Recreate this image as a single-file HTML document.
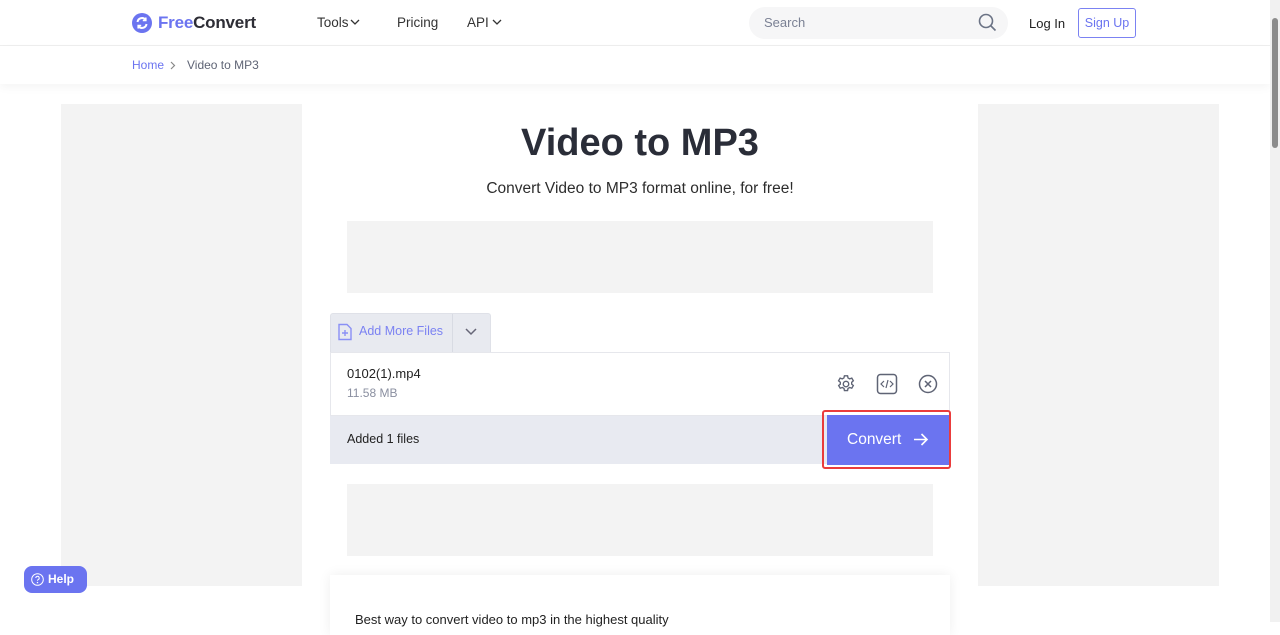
<!DOCTYPE html>
<html><head><meta charset="utf-8"><style>
*{box-sizing:border-box;margin:0;padding:0}
body{width:1280px;height:622px;overflow:hidden;background:#fff;font-family:"Liberation Sans",sans-serif;color:#2d2d2d;position:relative}
.hdr{position:absolute;left:0;top:0;width:1270px;height:46px;border-bottom:1px solid #eee;background:#fff}
.bc{position:absolute;left:0;top:46px;width:1270px;height:38px;background:#fff;box-shadow:0 4px 8px rgba(0,0,0,.04);font-size:12px}
.abs{position:absolute}
.ad{position:absolute;background:#f3f3f3}
.sb{position:absolute;right:0;top:0;width:10px;height:622px;background:#f1f1f1}
</style></head><body>
<div class="hdr">
 <svg class="abs" style="left:132px;top:13px" width="20" height="20" viewBox="0 0 20 20"><circle cx="10" cy="10" r="10" fill="#6b74f0"/><path d="M5.5 9a4.5 4.5 0 0 1 8-2.2M14.5 11a4.5 4.5 0 0 1-8 2.2" stroke="#fff" stroke-width="2" fill="none"/><path d="M13.8 4.5v3h-3M6.2 15.5v-3h3" stroke="#fff" stroke-width="1.6" fill="none"/></svg>
 <div class="abs" style="left:158px;top:13px;font-size:17px;font-weight:bold;letter-spacing:-.2px"><span style="color:#6b74f0">Free</span><span style="color:#2d2d35">Convert</span></div>
 <div class="abs" style="left:317px;top:15px;font-size:13.5px;color:#333">Tools</div>
 <svg class="abs" style="left:350px;top:19px" width="10" height="7" viewBox="0 0 10 7"><path d="M1 1l4 4 4-4" stroke="#333" stroke-width="1.3" fill="none"/></svg>
 <div class="abs" style="left:397px;top:15px;font-size:13.5px;color:#333">Pricing</div>
 <div class="abs" style="left:467px;top:15px;font-size:13.5px;color:#333">API</div>
 <svg class="abs" style="left:492px;top:19px" width="10" height="7" viewBox="0 0 10 7"><path d="M1 1l4 4 4-4" stroke="#333" stroke-width="1.3" fill="none"/></svg>
 <div class="abs" style="left:749px;top:7px;width:259px;height:32px;border-radius:16px;background:#f6f6f7"></div>
 <div class="abs" style="left:764px;top:15px;font-size:13px;color:#7b8194">Search</div>
 <svg class="abs" style="left:978px;top:13px" width="19" height="19" viewBox="0 0 19 19"><circle cx="8" cy="8" r="6.5" stroke="#6b7385" stroke-width="1.6" fill="none"/><path d="M13 13l4.5 4.5" stroke="#6b7385" stroke-width="1.6"/></svg>
 <div class="abs" style="left:1029px;top:16px;font-size:13px;color:#222">Log In</div>
 <div class="abs" style="left:1078px;top:8px;width:58px;height:30px;border:1px solid #7b82f2;border-radius:3px;color:#6b74f0;font-size:12.5px;text-align:center;line-height:28px">Sign Up</div>
</div>
<div class="bc"><span class="abs" style="left:132px;top:12px;color:#6b74f0">Home</span>
<svg class="abs" style="left:170px;top:15px" width="6" height="9" viewBox="0 0 6 9"><path d="M1 1l3.5 3.5L1 8" stroke="#888" stroke-width="1.2" fill="none"/></svg>
<span class="abs" style="left:187px;top:12px;color:#5f6475">Video to MP3</span></div>
<div class="ad" style="left:61px;top:104px;width:241px;height:482px"></div>
<div class="ad" style="left:978px;top:104px;width:241px;height:482px"></div>
<div class="abs" style="left:302px;top:122px;width:676px;text-align:center;font-size:38px;font-weight:bold;color:#2a2d38">Video to MP3</div>
<div class="abs" style="left:302px;top:180px;width:676px;text-align:center;font-size:15.5px;color:#2d2d2d">Convert Video to MP3 format online, for free!</div>
<div class="ad" style="left:347px;top:221px;width:586px;height:72px"></div>
<div class="abs" style="left:330px;top:313px;width:161px;height:40px;background:#e8eaf0;border:1px solid #dfe1e8;border-bottom:none;border-radius:3px 3px 0 0"></div>
<div class="abs" style="left:452px;top:314px;width:1px;height:38px;background:#d8dbe3"></div>
<svg class="abs" style="left:337px;top:323px" width="16" height="18" viewBox="0 0 16 18"><path d="M2 1.5h8l4 4V16.5H2z" stroke="#8a90f5" stroke-width="1.4" fill="none"/><path d="M8 7v6M5 10h6" stroke="#8a90f5" stroke-width="1.4"/></svg>
<div class="abs" style="left:359px;top:324px;font-size:12.5px;color:#7b82f2">Add More Files</div>
<svg class="abs" style="left:464px;top:327px" width="14" height="10" viewBox="0 0 14 10"><path d="M2 2l5 5 5-5" stroke="#667" stroke-width="1.5" fill="none"/></svg>
<div class="abs" style="left:330px;top:352px;width:620px;height:64px;background:#fff;border:1px solid #e6e7ec"></div>
<div class="abs" style="left:347px;top:366px;font-size:13px;color:#222">0102(1).mp4</div>
<div class="abs" style="left:347px;top:386px;font-size:12px;color:#8a8fa0">11.58 MB</div>
<svg class="abs" style="left:835px;top:373px" width="22" height="22" viewBox="0 0 24 24"><circle cx="12" cy="12" r="3" stroke="#5f6475" stroke-width="1.5" fill="none"/><path d="M10.3 3h3.4l.5 2.4 1.8 1 2.3-.8 1.7 2.9-1.8 1.6v2l1.8 1.6-1.7 2.9-2.3-.8-1.8 1-.5 2.4h-3.4l-.5-2.4-1.8-1-2.3.8-1.7-2.9 1.8-1.6v-2L3.9 8.5l1.7-2.9 2.3.8 1.8-1z" stroke="#5f6475" stroke-width="1.5" fill="none"/></svg>
<svg class="abs" style="left:876px;top:373px" width="22" height="22" viewBox="0 0 22 22"><rect x="1.5" y="1.5" width="19" height="19" rx="3" stroke="#5f6475" stroke-width="1.5" fill="none"/><path d="M8 8l-3 3 3 3M14 8l3 3-3 3M12 7l-2 8" stroke="#5f6475" stroke-width="1.2" fill="none"/></svg>
<svg class="abs" style="left:918px;top:374px" width="20" height="20" viewBox="0 0 20 20"><circle cx="10" cy="10" r="8.5" stroke="#5f6475" stroke-width="1.5" fill="none"/><path d="M7 7l6 6M13 7l-6 6" stroke="#5f6475" stroke-width="1.5"/></svg>
<div class="abs" style="left:330px;top:416px;width:620px;height:48px;background:#e8eaf1"></div>
<div class="abs" style="left:347px;top:432px;font-size:12.5px;color:#222">Added 1 files</div>
<div class="abs" style="left:822px;top:410px;width:129px;height:59px;border:2px solid #ea3c3c;border-radius:3px"></div>
<div class="abs" style="left:827px;top:415px;width:122px;height:50px;background:#6b74f0"></div>
<div class="abs" style="left:847px;top:431px;font-size:15.5px;color:#fff">Convert</div>
<svg class="abs" style="left:913px;top:432px" width="16" height="15" viewBox="0 0 16 15"><path d="M1 7.5h13M8.5 2l5.5 5.5L8.5 13" stroke="#fff" stroke-width="1.6" fill="none"/></svg>
<div class="ad" style="left:347px;top:484px;width:586px;height:72px"></div>
<div class="abs" style="left:330px;top:575px;width:620px;height:60px;background:#fff;box-shadow:0 0 12px rgba(0,0,0,.07)"></div>
<div class="abs" style="left:355px;top:612px;font-size:13px;color:#222">Best way to convert video to mp3 in the highest quality</div>
<div class="abs" style="left:24px;top:566px;width:63px;height:27px;background:#6b74f0;border-radius:8px"></div>
<svg class="abs" style="left:31px;top:573px" width="13" height="13" viewBox="0 0 13 13"><circle cx="6.5" cy="6.5" r="5.8" stroke="#fff" stroke-width="1" fill="none"/><path d="M4.8 5a1.7 1.7 0 1 1 2.3 1.6c-.5.2-.6.5-.6 1.1" stroke="#fff" stroke-width="1" fill="none"/><circle cx="6.5" cy="9.6" r=".7" fill="#fff"/></svg>
<div class="abs" style="left:48px;top:572px;font-size:12px;font-weight:bold;color:#fff">Help</div>
<div class="sb"><div style="position:absolute;left:2px;top:18px;width:6px;height:130px;background:#8c8c8c;border-radius:3px"></div></div>
</body></html>
